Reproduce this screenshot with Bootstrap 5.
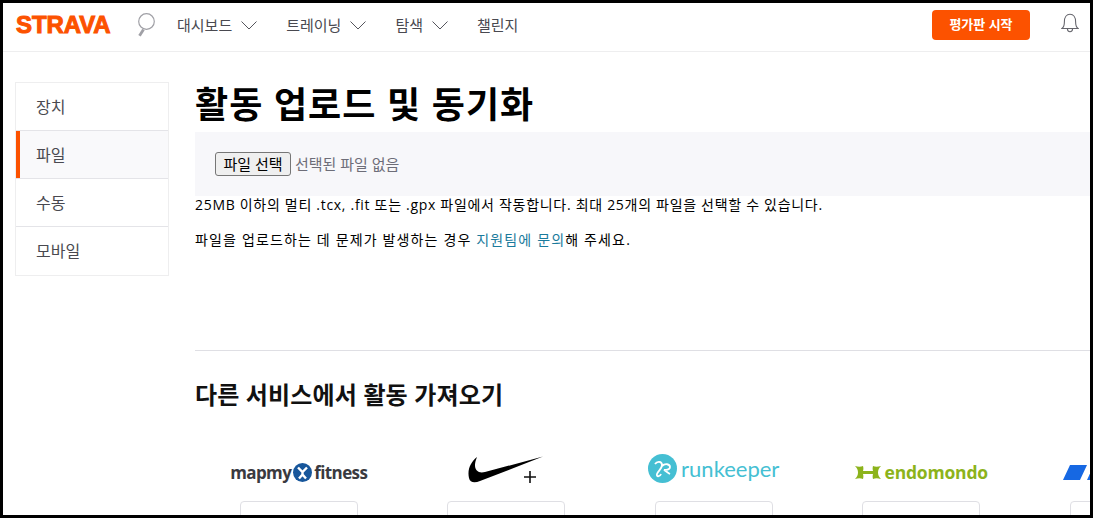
<!DOCTYPE html>
<html lang="ko">
<head>
    <meta charset="UTF-8">
    <meta name="viewport" content="width=device-width, initial-scale=1.0">
    <link href="https://cdn.jsdelivr.net/npm/bootstrap@5.3.0/dist/css/bootstrap.min.css" rel="stylesheet">
    <title>Strava 업로드</title>
    <style>
        html, body { height: 100%; }
        body { background: #000; padding: 3px; overflow: hidden; font-family: "Open Sans", "Noto Sans CJK KR", sans-serif; font-size: 14px; color: #000; }
        .shell { height: 512px; background: #fff; overflow: hidden; }
        .topbar { height: 49px; border-bottom: 1px solid #eeeeef; padding: 0 11px 4px 13px; }
        .logo { width: 95px; color: #fc5200; font: 900 24px/1 "Liberation Sans", sans-serif; letter-spacing: -.1px; -webkit-text-stroke: 1px #fc5200; }
        .find-ico { margin: 0 22px 0 26px; }
        .menu-item { color: #494950; font-size: 15px; margin-right: 29px; gap: 9px; }
        .start-btn { width: 98px; height: 30px; padding: 0; border: 0; border-radius: 4px; background: #fc5200; color: #fff; font-size: 13px; font-weight: 700; margin-right: 31px; }
        .page { padding: 30px 0 0 12px; gap: 26px; }
        .side { width: 154px; flex: none; height: 194px; border: 1px solid #eeeeef; }
        .side-link { display: block; height: 48px; line-height: 48px; padding-left: 20px; font-size: 16px; color: #494950; border-bottom: 1px solid #e4e4e8; }
        .side-link:last-child { border-bottom: 0; }
        .side-on { background: #f9f9fb; box-shadow: inset 4px 0 0 #fc5200; }
        .body-col { width: 1038px; flex: none; }
        .title { font-size: 36px; font-weight: 700; line-height: 40px; margin: 0 0 7px; color: #000; letter-spacing: 1.1px; padding-top: 3px; }
        .upload-box { height: 64px; background: #f7f7fa; padding: 0 20px; gap: 4px; }
        .pick-btn { width: 76px; height: 24px; padding: 0; border: 1px solid #767676; border-radius: 3px; background: #efefef; color: #000; font-size: 15px; line-height: 20px; }
        .no-file { color: #6d6d78; font-size: 15px; }
        .info { margin: 0; line-height: 18px; font-size: 14px; letter-spacing: .7px; }
        .info-next { margin-top: 17px; letter-spacing: 1.15px; }
        .support { color: #1a7a9c; text-decoration: none; }
        .divider { height: 1px; background: #dfdfe4; margin: 101px 0 0; opacity: 1; border: 0; }
        .sub-title { font-size: 24px; font-weight: 700; line-height: 30px; margin: 29px 0 0; letter-spacing: .15px; color: #111; }
        .svc-row { margin-top: 34px; }
        .svc { width: 207.5px; flex: none; }
        .svc-logo { height: 57px; gap: 2px; }
        .svc-up { padding-bottom: 8px; }
        .svc-up-less { padding-bottom: 6px; }
        .svc-box { width: 118px; height: 40px; border: 1px solid #dfdfe4; border-radius: 4px; }
        .mapmy { font: 700 17px/1 "Open Sans", sans-serif; color: #3a3a3f; letter-spacing: -.6px; }
        .rk { font: 400 22px/1 "Lato", sans-serif; color: #45bfd3; }
        .endo { font: 700 17.5px/1 "Open Sans", sans-serif; color: #8cb31b; letter-spacing: -.2px; }
    </style>
</head>
<body>
    <div class="shell">
        <header class="topbar d-flex align-items-center">
            <div class="logo">STRAVA</div>
            <svg class="find-ico" width="18" height="24" viewBox="0 0 18 24" fill="none" stroke="#a0a0a6" stroke-width="1.2"><circle cx="9.500" cy="8.500" r="7.800"/><path d="M6.500 16.500 2.500 22.800" stroke-width="2.800"/></svg>
            <div class="menu-item d-flex align-items-center">대시보드
                <svg width="16" height="9" viewBox="0 0 16 9" fill="none" stroke="#55555c"><path d="M.5.5 8 8l7.500-7.500"/></svg></div>
            <div class="menu-item d-flex align-items-center">트레이닝
                <svg width="16" height="9" viewBox="0 0 16 9" fill="none" stroke="#55555c"><path d="M.5.5 8 8l7.500-7.500"/></svg></div>
            <div class="menu-item d-flex align-items-center">탐색
                <svg width="16" height="9" viewBox="0 0 16 9" fill="none" stroke="#55555c"><path d="M.5.5 8 8l7.500-7.500"/></svg></div>
            <div class="menu-item">챌린지</div>
            <button class="start-btn ms-auto" type="button">평가판 시작</button>
            <svg class="mb-1" width="18" height="20" viewBox="0 0 18 20" fill="none" stroke="#66666d" stroke-width="1.1"><path d="M1 15.500c2-1.600 2.400-3.400 2.400-6.800C3.400 4.400 5.600 1.200 9 1.200s5.600 3.200 5.600 7.500c0 3.400.4 5.200 2.400 6.800z"/><path d="M6.400 15.800a2.600 2.900 0 0 0 5.200 0"/></svg>
        </header>
        <main class="page d-flex">
            <nav class="side">
                <a class="side-link text-decoration-none" href="#">장치</a>
                <a class="side-link side-on text-decoration-none" href="#">파일</a>
                <a class="side-link text-decoration-none" href="#">수동</a>
                <a class="side-link text-decoration-none" href="#">모바일</a>
            </nav>
            <div class="body-col">
                <h1 class="title">활동 업로드 및 동기화</h1>
                <div class="upload-box d-flex align-items-center">
                    <button class="pick-btn" type="button">파일 선택</button>
                    <span class="no-file">선택된 파일 없음</span>
                </div>
                <p class="info">25MB 이하의 멀티 .tcx, .fit 또는 .gpx 파일에서 작동합니다. 최대 25개의 파일을 선택할 수 있습니다.</p>
                <p class="info info-next">파일을 업로드하는 데 문제가 발생하는 경우 <a class="support" href="#">지원팀에 문의</a>해 주세요.</p>
                <hr class="divider">
                <h2 class="sub-title">다른 서비스에서 활동 가져오기</h2>
                <div class="svc-row d-flex">
                    <div class="svc d-flex flex-column align-items-center">
                        <div class="svc-logo d-flex align-items-center">
                            <span class="mapmy">mapmy</span>
                            <svg width="19" height="19" viewBox="0 0 19 19"><circle cx="9.500" cy="9.500" r="9.500" fill="#17569b"/><path d="M5 4.500 9.500 9l4.500-4.500M9.500 9v3M6 15.500l3.500-4 3.500 4" fill="none" stroke="#fff" stroke-width="2.400"/></svg>
                            <span class="mapmy">fitness</span>
                        </div>
                        <div class="svc-box"></div>
                    </div>
                    <div class="svc d-flex flex-column align-items-center">
                        <div class="svc-logo svc-up-less d-flex align-items-center">
                            <svg width="76" height="28" viewBox="0 0 76 28"><path d="M9 1C3 6-1 13 1 22c1 5 6 5 11 3L75 .6 17 16C9 18 4 13 9 1z" fill="#000"/><path d="M62 15v12M56 21h12" stroke="#111" stroke-width="1.600"/></svg>
                        </div>
                        <div class="svc-box"></div>
                    </div>
                    <div class="svc d-flex flex-column align-items-center">
                        <div class="svc-logo svc-up d-flex align-items-center gap-1">
                            <svg width="29" height="29" viewBox="0 0 29 29"><circle cx="14.500" cy="14.500" r="14.500" fill="#45bfd3"/><path d="M7 10c2-3 7-3 7 1s-4 6-5 9c-1 3 3 3 4 0M14 12c3-3 8-2 8 1s-5 3-6 3c2 1 4 3 6 4" fill="none" stroke="#fff" stroke-width="1.800"/></svg>
                            <span class="rk">runkeeper</span>
                        </div>
                        <div class="svc-box"></div>
                    </div>
                    <div class="svc d-flex flex-column align-items-center">
                        <div class="svc-logo d-flex align-items-center gap-1">
                            <svg width="26" height="15" viewBox="0 0 26 15"><path d="M0 1c3 1 6 1 8 0 .5 2 .5 3 0 5h10c-.5-2-.5-3 0-5 2 1 5 1 8 0-2 2-3 4-3 6.500s1 4.500 3 6.500c-3-1-6-1-8 0-.5-2-.5-3 0-5H8c.5 2 .5 3 0 5-2-1-5-1-8 0 2-2 3-4 3-6.500S2 3 0 1z" fill="#8cb31b"/></svg>
                            <span class="endo">endomondo</span>
                        </div>
                        <div class="svc-box"></div>
                    </div>
                    <div class="svc d-flex flex-column align-items-center">
                        <div class="svc-logo d-flex align-items-center">
                            <svg width="132" height="15" viewBox="0 0 132 15"><path d="M7 0h17l-7 15H0z" fill="#1668e3"/><path d="M31 0h17l-7 15H24z" fill="#1668e3"/></svg>
                        </div>
                        <div class="svc-box"></div>
                    </div>
                </div>
            </div>
        </main>
    </div>
    <script src="https://cdn.jsdelivr.net/npm/bootstrap@5.3.0/dist/js/bootstrap.bundle.min.js"></script>
</body>
</html>
